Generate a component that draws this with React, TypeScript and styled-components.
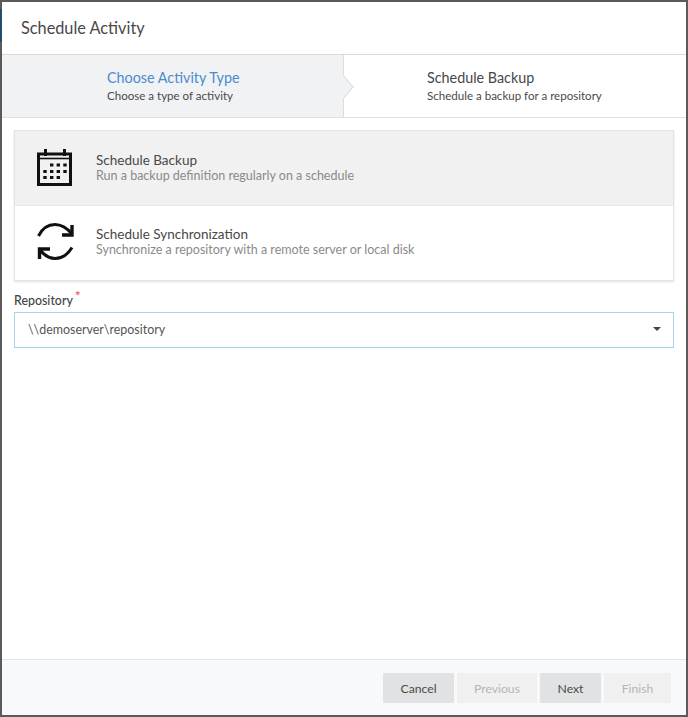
import styled, { createGlobalStyle } from 'styled-components';

const GlobalStyle = createGlobalStyle`
  html, body {
    margin: 0;
    padding: 0;
    background: #fff;
  }
  * {
    box-sizing: border-box;
  }
`;

function CalendarIcon(): JSX.Element {
  return (
    <svg width="36" height="38" viewBox="0 0 36 38" fill="none">
      <path d="M1.5 5H33.5V35.5H1.5Z" stroke="#111" strokeWidth="3" />
      <path d="M2 9.5H33" stroke="#111" strokeWidth="1.6" />
      <rect x="7" y="0" width="3" height="7" fill="#111" />
      <rect x="26" y="0" width="3" height="7" fill="#111" />
      {[
        [13, 14.5],
        [19.6, 14.5],
        [26.3, 14.5],
        [6.3, 21],
        [13, 21],
        [19.6, 21],
        [26.3, 21],
        [6.3, 27],
        [13, 27],
        [19.6, 27],
      ].map(([x, y]) => (
        <rect key={`${x}-${y}`} x={x} y={y} width="3.4" height="3" fill="#111" />
      ))}
    </svg>
  );
}

function SyncIcon(): JSX.Element {
  return (
    <svg width="36" height="38" viewBox="0 0 36 38" fill="none" overflow="visible">
      <path d="M1.5 13C5 6 11 1.5 18 1.5C24 1.5 30 5 35 11" stroke="#111" strokeWidth="3" />
      <path d="M35 2V12H25" stroke="#111" strokeWidth="3.4" />
      <path d="M35 24.5C31 31 25 35.5 18 35.5C12 35.5 7 32 3 27" stroke="#111" strokeWidth="3" />
      <path d="M2.5 36V26H13" stroke="#111" strokeWidth="3.4" />
    </svg>
  );
}

export default function App(): JSX.Element {
  return (
    <>
      <GlobalStyle />
      <Frame>
        <EdgeSliver />
        <Header>Schedule Activity</Header>
        <Steps>
          <Step active>
            <StepText>
              <StepTitle active>Choose Activity Type</StepTitle>
              <StepSub>Choose a type of activity</StepSub>
            </StepText>
          </Step>
          <Step>
            <StepText>
              <StepTitle>Schedule Backup</StepTitle>
              <StepSub>Schedule a backup for a repository</StepSub>
            </StepText>
          </Step>
        </Steps>
        <Body>
          <Card>
            <Option selected>
              <IconBox>
                <CalendarIcon />
              </IconBox>
              <div>
                <OptionTitle>Schedule Backup</OptionTitle>
                <OptionSub>Run a backup definition regularly on a schedule</OptionSub>
              </div>
            </Option>
            <Option>
              <IconBox>
                <SyncIcon />
              </IconBox>
              <div>
                <OptionTitle>Schedule Synchronization</OptionTitle>
                <OptionSub>Synchronize a repository with a remote server or local disk</OptionSub>
              </div>
            </Option>
          </Card>
          <Label>
            Repository<Required>*</Required>
          </Label>
          <Select>
            <span>\\demoserver\repository</span>
            <Caret />
          </Select>
        </Body>
        <Footer>
          <Button wide={71}>Cancel</Button>
          <Button wide={80} disabled>
            Previous
          </Button>
          <Button wide={61}>Next</Button>
          <Button wide={67} disabled>
            Finish
          </Button>
        </Footer>
      </Frame>
    </>
  );
}

const Frame = styled.div`
  position: relative;
  width: 688px;
  height: 717px;
  display: flex;
  flex-direction: column;
  border: 2px solid #5a5a5a;
  background: #fff;
  font-family: Lato, 'Open Sans', sans-serif;
  color: #3d3d3d;
`;

const EdgeSliver = styled.div`
  position: absolute;
  left: -2px;
  top: 7px;
  width: 2px;
  height: 33px;
  background: #1f4f6b;
`;

const Header = styled.div`
  height: 53px;
  flex: none;
  padding: 0 0 2px 19px;
  display: flex;
  align-items: center;
  font-size: 16.3px;
  color: #484848;
  border-bottom: 1px solid #d9dadb;
`;

const Steps = styled.div`
  height: 63px;
  flex: none;
  display: flex;
  border-bottom: 1px solid #dfe0e1;
`;

const Step = styled.div<{ active?: boolean }>`
  position: relative;
  flex: 1;
  display: flex;
  background: ${p => (p.active ? '#f1f2f4' : '#fff')};
  padding-left: ${p => (p.active ? '105px' : '83px')};
  ${p => (p.active ? 'flex: none; width: 342px; border-right: 1px solid #dcdddf; z-index: 1;' : '')}
  ${p =>
    p.active
      ? `&::after {
    content: '';
    position: absolute;
    right: -9px;
    top: 23px;
    width: 17px;
    height: 17px;
    background: #f1f2f4;
    border-top: 1px solid #dcdddf;
    border-right: 1px solid #dcdddf;
    transform: scaleX(0.83) rotate(45deg);
  }`
      : ''}
`;

const StepText = styled.div`
  padding-top: 14px;
`;

const StepTitle = styled.div<{ active?: boolean }>`
  font-size: 14.35px;
  line-height: 18px;
  color: ${p => (p.active ? '#4a8bd0' : '#484848')};
`;

const StepSub = styled.div`
  font-size: 11.55px;
  line-height: 18px;
  color: #4a4a4a;
`;

const Body = styled.div`
  flex: 1;
  padding: 12px 12px 0;
`;

const Card = styled.div`
  border: 1px solid #e4e4e4;
  box-shadow: 0 1px 2px rgba(0, 0, 0, 0.12);
`;

const Option = styled.div<{ selected?: boolean }>`
  height: 74px;
  display: flex;
  align-items: center;
  padding-left: 22px;
  background: ${p => (p.selected ? '#f1f1f1' : '#fff')};
  & + & {
    height: 75px;
    border-top: 1px solid #e8e8e8;
    padding-bottom: 2px;
  }
`;

const IconBox = styled.div`
  width: 59px;
  height: 38px;
  flex: none;
`;

const OptionTitle = styled.div`
  font-size: 13.5px;
  line-height: 16px;
  color: #484848;
`;

const OptionSub = styled.div`
  font-size: 12.5px;
  line-height: 16px;
  color: #8a8a8a;
`;

const Label = styled.div`
  margin-top: 12px;
  height: 19px;
  font-size: 12.4px;
  font-weight: 500;
  line-height: 14px;
  color: #444;
`;

const Required = styled.span`
  position: relative;
  top: -4px;
  margin-left: 2px;
  font-size: 14px;
  color: #f05050;
`;

const Select = styled.div`
  height: 36px;
  display: flex;
  align-items: center;
  justify-content: space-between;
  padding: 0 12px 2px 13px;
  border: 1px solid #a9d5e6;
  font-size: 12.45px;
  color: #555;
`;

const Caret = styled.span`
  width: 0;
  height: 0;
  border-left: 4px solid transparent;
  border-right: 4px solid transparent;
  border-top: 4px solid #444;
`;

const Footer = styled.div`
  height: 56px;
  flex: none;
  display: flex;
  justify-content: flex-end;
  gap: 3px;
  padding: 13px 15px 0 0;
  background: #f8f9fb;
  border-top: 1px solid #e2e4e6;
`;

const Button = styled.div<{ wide: number; disabled?: boolean }>`
  width: ${p => p.wide}px;
  height: 30px;
  display: flex;
  align-items: center;
  justify-content: center;
  font-size: 12.2px;
  background: ${p => (p.disabled ? '#f0f0f1' : '#e1e2e3')};
  color: ${p => (p.disabled ? '#b4b5b6' : '#4a4a4a')};
`;
